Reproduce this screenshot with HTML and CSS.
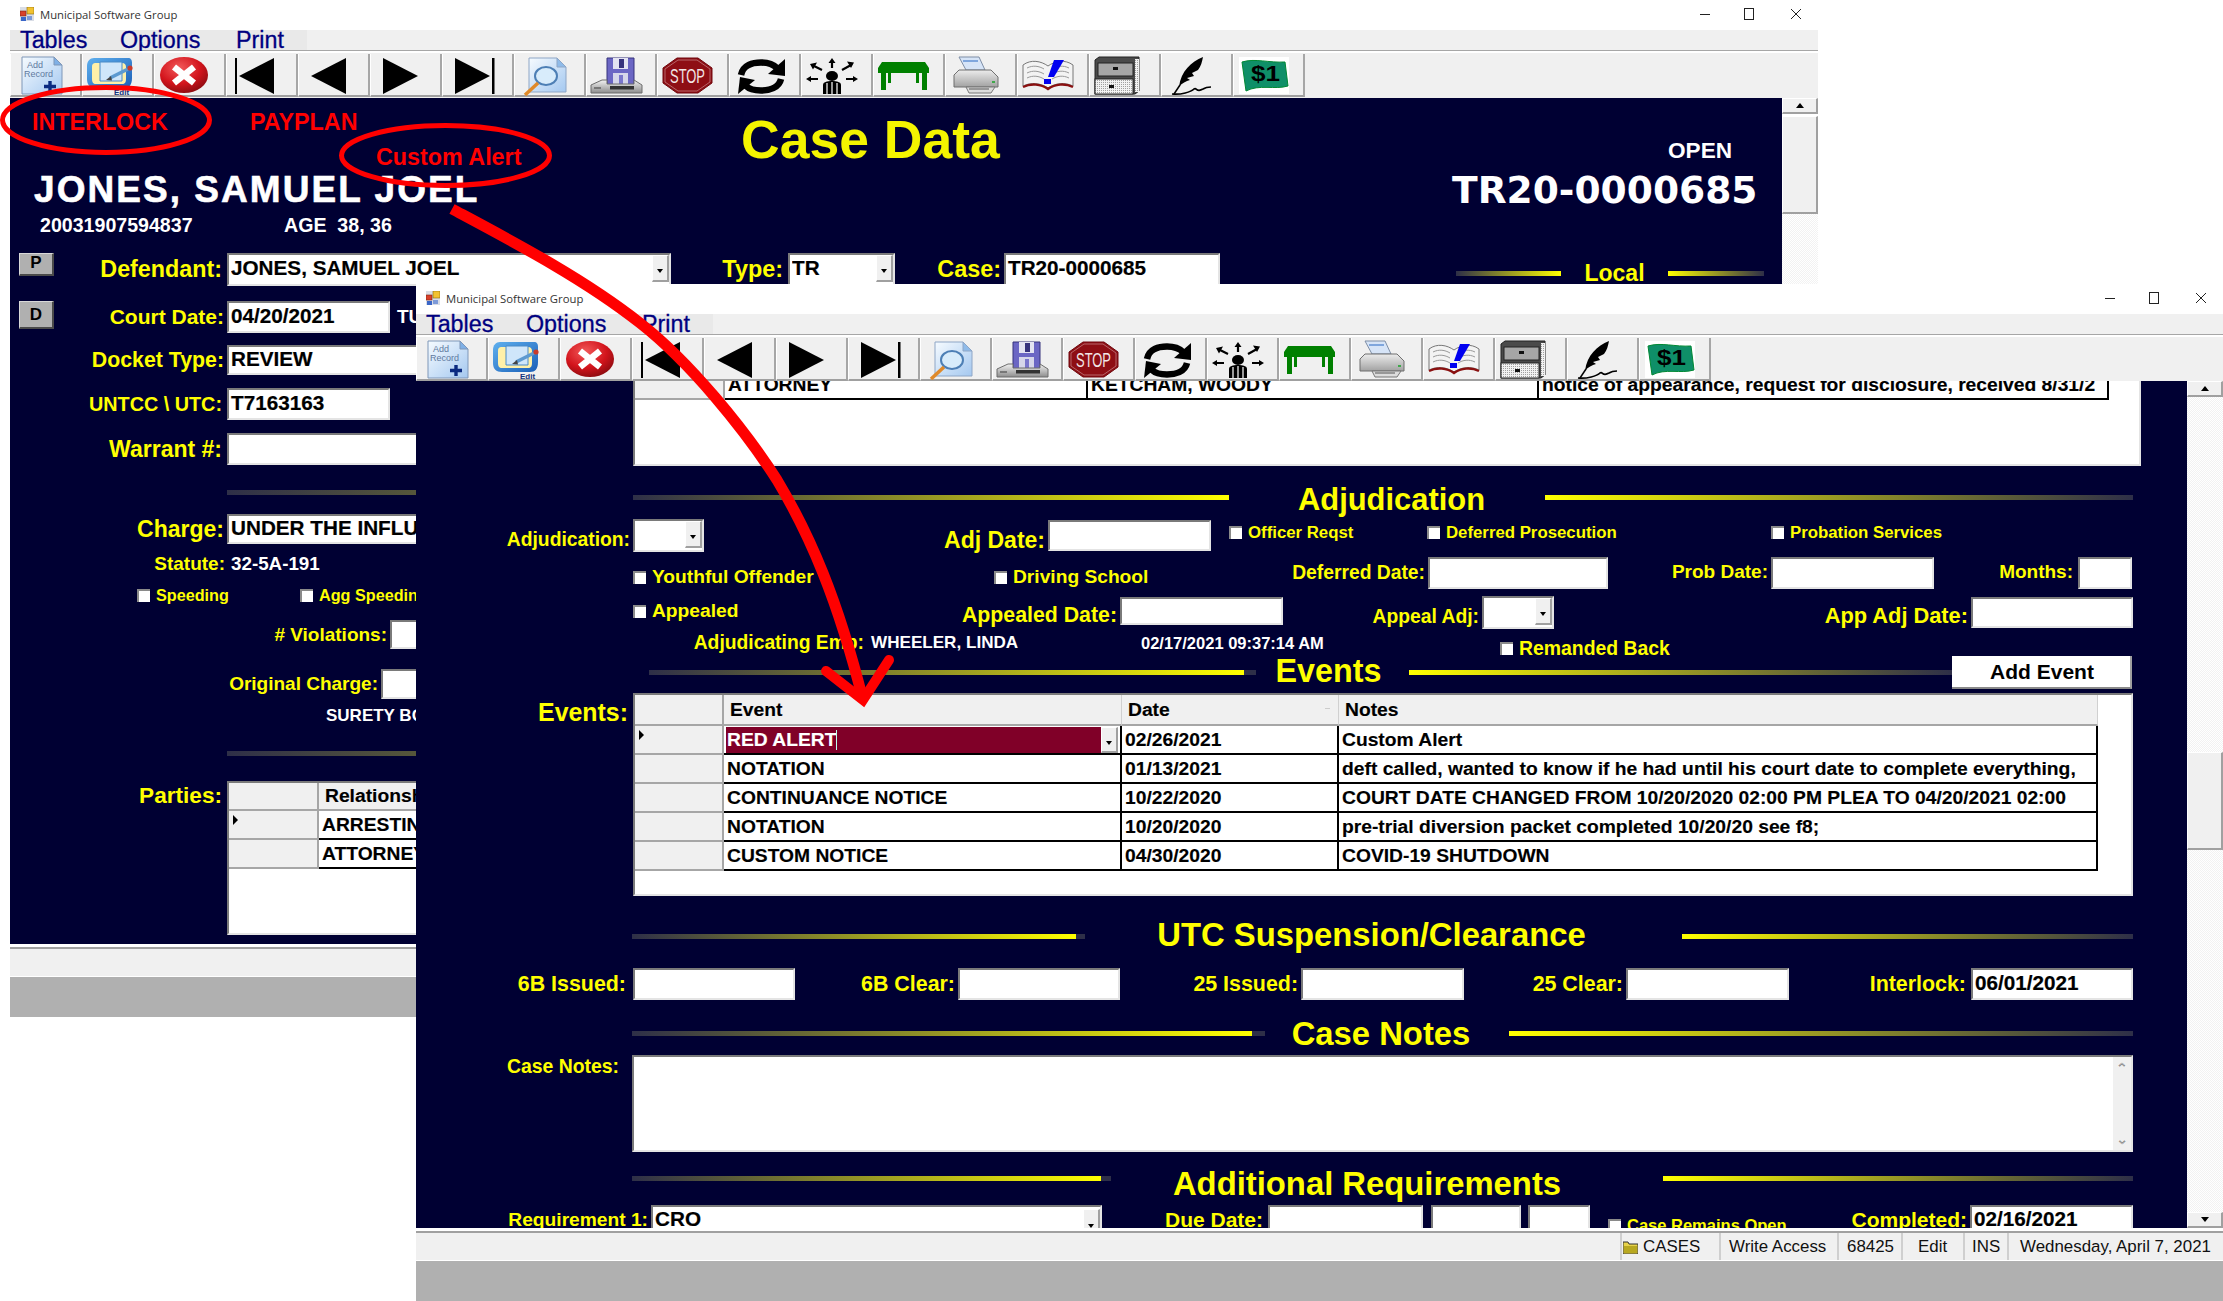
FILE: index.html
```html
<!DOCTYPE html>
<html lang="en">
<head>
<meta charset="utf-8">
<title>Municipal Software Group</title>
<link rel="stylesheet" href="styles.css">
</head>
<body>
<svg class="sprite" width="0" height="0" aria-hidden="true">
  <defs>
    <linearGradient id="gDoc" x1="0" y1="0" x2="1" y2="1"><stop offset="0" stop-color="#f6fbff"/><stop offset="1" stop-color="#a4c8f0"/></linearGradient>
    <linearGradient id="gEdit" x1="0" y1="0" x2="1" y2="1"><stop offset="0" stop-color="#5fb0ee"/><stop offset="1" stop-color="#1a5fb8"/></linearGradient>
    <radialGradient id="gRed" cx=".4" cy=".3" r=".8"><stop offset="0" stop-color="#f25a5a"/><stop offset=".55" stop-color="#d3141c"/><stop offset="1" stop-color="#7c0a0e"/></radialGradient>
    <linearGradient id="gDrive" x1="0" y1="0" x2="0" y2="1"><stop offset="0" stop-color="#f2f2f2"/><stop offset="1" stop-color="#8d8d8d"/></linearGradient>
    <linearGradient id="gPrint" x1="0" y1="0" x2="0" y2="1"><stop offset="0" stop-color="#ececec"/><stop offset="1" stop-color="#a2a2a2"/></linearGradient>
    <pattern id="pDots" width="2" height="2" patternUnits="userSpaceOnUse"><rect width="2" height="2" fill="#f2f2f2"/><rect width="1" height="1" fill="#a0a0a0"/></pattern>
    <symbol id="i-win" viewBox="0 0 14 14"><rect x="0" y="0" width="14" height="14" fill="#d9dde6"/><rect x="7" y="0" width="7" height="7" fill="#f2c230" stroke="#8a6a10" stroke-width=".6"/><rect x="0" y="4" width="6" height="5" fill="#d8402a" stroke="#7d2413" stroke-width=".6"/><rect x="1" y="10" width="5" height="4" fill="#3a66c8"/><rect x="7" y="9" width="5" height="4" fill="#7d9ad8"/></symbol>
    <symbol id="i-x" viewBox="0 0 12 12"><path d="M1 1L11 11M11 1L1 11" stroke="#222" stroke-width="1" fill="none"/></symbol>
    <symbol id="i-add" viewBox="0 0 72 42"><path d="M12 3H44L52 11V40H12Z" fill="url(#gDoc)" stroke="#7f97b8"/><path d="M44 3V11H52Z" fill="#7fb0e6" stroke="#7f97b8"/><text x="17" y="14" class="ict">Add</text><text x="14" y="23" class="ict">Record</text><path d="M40 27V38M34 32.500H46" stroke="#0b2a80" stroke-width="3.400" fill="none"/></symbol>
    <symbol id="i-edit" viewBox="0 0 72 42"><path d="M12 4H46C49 4 50 6 50 9V24C50 31 47 34 42 34H14C8 34 5 31 5 25V12C5 7 8 4 12 4Z" fill="url(#gEdit)"/><path d="M14 9H40C43 9 44 11 44 13V25C44 28 43 30 40 30H14C11 30 10 28 10 25V13C10 10 11 9 14 9Z" fill="#fff0a8"/><path d="M18 8H40V27H18Z" fill="#cfe6fa" stroke="#4a8ac6"/><path d="M28 24L46 15" stroke="#5d9ad0" stroke-width="3.500"/><path d="M29 22L24 26L30 26.500Z" fill="#444"/><circle cx="48" cy="14" r="2.600" fill="#c83a2a"/><text x="32" y="41" class="ice">Edit</text></symbol>
    <symbol id="i-close" viewBox="0 0 72 42"><ellipse cx="30" cy="21" rx="24" ry="18" fill="url(#gRed)"/><path d="M20 13L40 29M40 13L20 29" stroke="#fff" stroke-width="6.500"/></symbol>
    <symbol id="i-first" viewBox="0 0 72 42"><rect x="9" y="4" width="2" height="36"/><path d="M13 22L48 4V40Z"/></symbol>
    <symbol id="i-prev" viewBox="0 0 72 42"><path d="M13 22L48 4V40Z"/></symbol>
    <symbol id="i-next" viewBox="0 0 72 42"><path d="M13 4L48 22L13 40Z"/></symbol>
    <symbol id="i-last" viewBox="0 0 72 42"><path d="M13 4L48 22L13 40Z"/><rect x="50" y="4" width="2.500" height="36"/></symbol>
    <symbol id="i-find" viewBox="0 0 72 42"><path d="M15 4H43L52 13V38H15Z" fill="url(#gDoc)" stroke="#8ea6c6"/><path d="M43 4V13H52Z" fill="#8fbbe9" stroke="#8ea6c6"/><ellipse cx="32" cy="22" rx="11" ry="9" fill="#d8ecfb" stroke="#4d7fb5" stroke-width="2"/><path d="M24 29L11 41" stroke="#e08a2a" stroke-width="3.500"/></symbol>
    <symbol id="i-save" viewBox="0 0 72 42"><path d="M21 4H48V34H21Z" fill="#6b66c4" stroke="#37337d"/><rect x="27" y="4" width="15" height="11" fill="#e4e4f2"/><rect x="33" y="5" width="5" height="9" fill="#37337d"/><rect x="27" y="19" width="15" height="13" fill="#d6d6ea"/><path d="M33 21H37V30H33Z" fill="#7a76cc"/><path d="M16 26H21V30H48V26L56 31V39H5V31Z" fill="url(#gDrive)" stroke="#6d6d6d"/><rect x="24" y="32" width="24" height="3.500" fill="#333"/><rect x="8" y="33" width="7" height="2" fill="#777"/></symbol>
    <symbol id="i-stop" viewBox="0 0 72 42"><path d="M20 4H41L55 14V29L41 39H20L6 29V14Z" fill="#8e0e14" stroke="#70090e"/><path d="M21 6H40L53 15V28L40 37H21L8 28V15Z" fill="none" stroke="#c9898c" stroke-width=".7"/><text x="13" y="29" class="ics" textLength="35" lengthAdjust="spacingAndGlyphs">STOP</text></symbol>
    <symbol id="i-sync" viewBox="0 0 72 42"><path d="M12 21C14 11 24 8.500 32 8.500C39 8.500 44 10 48 14" fill="none" stroke="#000" stroke-width="6.500"/><path d="M56 5V22L39 20Z"/><path d="M52 25C50 34 40 36.500 32 36.500C25 36.500 20 35 17 32" fill="none" stroke="#000" stroke-width="6.500"/><path d="M9 40L11 23L26 26Z"/></symbol>
    <symbol id="i-people" viewBox="0 0 72 42"><ellipse cx="31" cy="22" rx="6" ry="5"/><path d="M22 40V31C22 28 26 27 31 27C36 27 40 28 40 31V40Z"/><path d="M31 28V40M26 29V40M36 29V40" stroke="#fff" stroke-width="1.200"/><path d="M31 14V8M21 16L13 12M41 16L50 11M17 25H8M45 25H54" stroke="#000" stroke-width="2.200"/><path d="M27.500 9L31 4L34.500 9ZM16 8.500L9 10L12 15.500ZM46 7.500L53 8.500L50 14ZM10 22V28L5 25ZM52 22V28L57 25Z"/></symbol>
    <symbol id="i-table" viewBox="0 0 72 42"><path d="M9 8H52L56 14V19H5V14Z" fill="#008000"/><rect x="8" y="19" width="5" height="17" fill="#008000"/><rect x="49" y="19" width="5" height="17" fill="#008000"/><rect x="15" y="19" width="3" height="10" fill="#008000"/><rect x="43" y="19" width="3" height="10" fill="#008000"/></symbol>
    <symbol id="i-print" viewBox="0 0 72 42"><path d="M14 3H34L40 16H21Z" fill="#d6e4f7" stroke="#7e8ea6"/><path d="M18 7H33" stroke="#7fa6dd" stroke-width="2"/><path d="M14 16H46L53 23V33H9V21Z" fill="url(#gPrint)" stroke="#6f6f6f"/><path d="M21 33H50L46 39H24Z" fill="#dcdcdc" stroke="#777"/><path d="M24 35H44" stroke="#555"/><rect x="47" y="27" width="3" height="2" fill="#3ea84a"/></symbol>
    <symbol id="i-book" viewBox="0 0 72 42"><path d="M6 11C14 5 24 7 31 12C38 7 48 5 56 11V32C48 28 38 29 31 34C24 29 14 28 6 32Z" fill="#f3f3f3" stroke="#777"/><path d="M10 14C16 11 22 12 27 15M10 19C16 16 22 17 27 20M10 24C16 21 22 22 27 25M35 15C40 12 46 11 52 14M35 20C40 17 46 16 52 19M35 25C40 22 46 21 52 24" stroke="#999" fill="none"/><path d="M6 33C14 29 24 30 31 35C38 30 48 29 56 33" stroke="#8a1010" stroke-width="2.400" fill="none"/><path d="M31 23L37 6H47L37 23Z" fill="#0000f0"/><rect x="27" y="25" width="7" height="5" fill="#0000f0"/></symbol>
    <symbol id="i-file" viewBox="0 0 72 42"><path d="M6 6L10 3H50V37L46 40H6Z" fill="#4a4a4a" stroke="#222"/><rect x="46" y="5" width="4" height="33" fill="url(#pDots)"/><rect x="9" y="9" width="35" height="13" fill="#a6a6a6" stroke="#222"/><rect x="24" y="13" width="5" height="3" fill="#111"/><rect x="6" y="25" width="38" height="15" fill="url(#pDots)" stroke="#222"/><rect x="20" y="31" width="5" height="3" fill="#111"/></symbol>
    <symbol id="i-quill" viewBox="0 0 72 42"><path d="M42 3C30 8 20 17 18 33C21 29 25 27 29 26L26 24L33 22L31 19L37 16C40 12 41 8 42 3Z"/><path d="M19 31L13 40" stroke="#000" stroke-width="1.500"/><path d="M11 40C20 41 30 38 33 35C36 33 35 39 42 35C45 33 47 33 50 33" fill="none" stroke="#000" stroke-width="1.700"/></symbol>
    <symbol id="i-cash" viewBox="0 0 72 42"><rect x="6" y="3" width="50" height="37" fill="#fff"/><path d="M9 8C22 4 36 9 52 8L55 32C42 36 26 30 13 37Z" fill="#0f8f68" stroke="#083" stroke-width="1"/><text x="18" y="27" class="icd" textLength="29" lengthAdjust="spacingAndGlyphs">$1</text></symbol>
    <symbol id="i-folder" viewBox="0 0 15 14"><path d="M0 2H5L6 4H15V14H0Z" fill="#e7d24a" stroke="#333"/><path d="M1 6H14V13H1Z" fill="#b8a820"/></symbol>
  </defs>
</svg>

<section class="win w1">
  <header class="title"><svg class="win-ic"><use href="#i-win"/></svg><span class="title-t">Municipal Software Group</span><span class="caps"><span class="cap-min"></span><span class="cap-max"></span><svg class="cap-x"><use href="#i-x"/></svg></span></header>
  <nav class="menu"><div class="menu-in"><span class="m1">Tables</span><span class="m2">Options</span><span>Print</span></div></nav>
  <div class="tools">
    <span class="tb"><svg><use href="#i-add"/></svg></span><span class="tb"><svg><use href="#i-edit"/></svg></span><span class="tb"><svg><use href="#i-close"/></svg></span><span class="tb"><svg><use href="#i-first"/></svg></span><span class="tb"><svg><use href="#i-prev"/></svg></span><span class="tb"><svg><use href="#i-next"/></svg></span><span class="tb"><svg><use href="#i-last"/></svg></span><span class="tb"><svg><use href="#i-find"/></svg></span><span class="tb"><svg><use href="#i-save"/></svg></span><span class="tb"><svg><use href="#i-stop"/></svg></span><span class="tb"><svg><use href="#i-sync"/></svg></span><span class="tb"><svg><use href="#i-people"/></svg></span><span class="tb"><svg><use href="#i-table"/></svg></span><span class="tb"><svg><use href="#i-print"/></svg></span><span class="tb"><svg><use href="#i-book"/></svg></span><span class="tb"><svg><use href="#i-file"/></svg></span><span class="tb"><svg><use href="#i-quill"/></svg></span><span class="tb"><svg><use href="#i-cash"/></svg></span>
  </div>
  <div class="client">
    <div class="form">
      <div class="head">
        <div class="head-l">
          <div class="alerts"><span class="alert a1">INTERLOCK</span><span class="alert">PAYPLAN</span></div>
          <div class="alert custom">Custom Alert</div>
          <div class="who">JONES, SAMUEL JOEL</div>
          <div class="ids"><span class="id1">20031907594837</span><span>AGE&nbsp; 38, 36</span></div>
        </div>
        <div class="casedata">Case Data</div>
        <div class="head-r"><div class="open">OPEN</div><div class="caseno">TR20-0000685</div></div>
      </div>
      <div class="r1a">
        <span></span><span class="pbtn">P</span><span class="lbl s233 pr5">Defendant:</span><div class="fld combo"><span>JONES, SAMUEL JOEL</span><i class="drop"></i></div><span class="lbl s234 pr5">Type:</span><div class="fld combo"><span>TR</span><i class="drop"></i></div><span class="lbl s234">Case:</span><div class="fld">TR20-0000685</div><span></span>
        <div class="local"><i class="bar bl w105"></i><span>Local</span><i class="bar br w96"></i></div>
      </div>
      <div class="r1b"><span></span><span class="pbtn dbtn">D</span><span class="lbl s21">Court Date:</span><div class="fld">04/20/2021</div><span class="tu">TUESDAY</span></div>
      <div class="lrow h30 mt12"><span class="lbl s213">Docket Type:</span><div class="fld">REVIEW</div></div>
      <div class="lrow short h32 mt13"><span class="lbl s198 pr5">UNTCC \ UTC:</span><div class="fld">T7163163</div></div>
      <div class="lrow h32 mt13"><span class="lbl s23 pr5">Warrant #:</span><div class="fld"></div></div>
      <i class="bar bl rule1"></i>
      <div class="lrow h30 mt19"><span class="lbl s23">Charge:</span><div class="fld">UNDER THE INFLUENCE OF ALCOHOL</div></div>
      <div class="lrow h17 mt11"><span class="lbl s19 pr3">Statute:</span><span class="val s188">32-5A-191</span></div>
      <div class="chkrow"><span class="chk s162"><i class="cb"></i>Speeding</span><span class="chk s162"><i class="cb"></i>Agg Speeding</span></div>
      <div class="violrow"><span class="lbl s19">&#35; Violations:</span><div class="fld"></div></div>
      <div class="origrow"><span class="lbl s19">Original Charge:</span><div class="fld"></div></div>
      <div class="surety">SURETY BOND</div>
      <i class="bar bl rule2"></i>
      <div class="partyrow">
        <span class="lbl s225 pr5 bigline">Parties:</span>
        <div class="grid gp1">
          <table class="dg">
            <tr class="hd"><th class="rh"></th><th>Relationship</th><th>Name</th></tr>
            <tr><td class="rh"><i class="ptr"></i></td><td class="wide">ARRESTING</td><td>OFFICER</td></tr>
            <tr><td class="rh"></td><td class="wide">ATTORNEY</td><td>KETCHAM, WOODY</td></tr>
          </table>
        </div>
      </div>
    </div>
    <aside class="sbar"><span class="sb-btn"><i class="up"></i></span><span class="sb-thumb t1"></span><span class="sb-track"></span><span class="sb-btn"><i class="dn"></i></span></aside>
  </div>
  <footer class="status"></footer>
  <div class="mdi"></div>
</section>

<section class="win w2">
  <header class="title"><svg class="win-ic"><use href="#i-win"/></svg><span class="title-t">Municipal Software Group</span><span class="caps"><span class="cap-min"></span><span class="cap-max"></span><svg class="cap-x"><use href="#i-x"/></svg></span></header>
  <nav class="menu"><div class="menu-in"><span class="m1">Tables</span><span class="m2">Options</span><span>Print</span></div></nav>
  <div class="tools">
    <span class="tb"><svg><use href="#i-add"/></svg></span><span class="tb"><svg><use href="#i-edit"/></svg></span><span class="tb"><svg><use href="#i-close"/></svg></span><span class="tb"><svg><use href="#i-first"/></svg></span><span class="tb"><svg><use href="#i-prev"/></svg></span><span class="tb"><svg><use href="#i-next"/></svg></span><span class="tb"><svg><use href="#i-last"/></svg></span><span class="tb"><svg><use href="#i-find"/></svg></span><span class="tb"><svg><use href="#i-save"/></svg></span><span class="tb"><svg><use href="#i-stop"/></svg></span><span class="tb"><svg><use href="#i-sync"/></svg></span><span class="tb"><svg><use href="#i-people"/></svg></span><span class="tb"><svg><use href="#i-table"/></svg></span><span class="tb"><svg><use href="#i-print"/></svg></span><span class="tb"><svg><use href="#i-book"/></svg></span><span class="tb"><svg><use href="#i-file"/></svg></span><span class="tb"><svg><use href="#i-quill"/></svg></span><span class="tb"><svg><use href="#i-cash"/></svg></span>
  </div>
  <div class="client">
    <div class="form">
      <div class="grid gp2">
        <table class="dg">
          <tr><td class="rh"></td><td class="c-rel">ATTORNEY</td><td class="c-name">KETCHAM, WOODY</td><td class="c-note">notice of appearance, request for disclosure, received 8/31/2</td></tr>
        </table>
      </div>

      <div class="sec sec-adj"><i class="bar bl"></i><h2 class="t31 tadj">Adjudication</h2><i class="bar br"></i></div>

      <div class="row ra"><span class="lbl s193 low4">Adjudication:</span><div class="fld combo"><span></span><i class="drop"></i></div><span class="lbl s23 low5">Adj Date:</span><div class="fld fh31"></div><span></span><span class="chk s168 up3"><i class="cb"></i>Officer Reqst</span><span class="chk s168 up3"><i class="cb"></i>Deferred Prosecution</span><span class="chk s168 up3"><i class="cb"></i>Probation Services</span></div>

      <div class="row rb"><span></span><span class="chk s192 low4"><i class="cb"></i>Youthful Offender</span><span class="chk s192 low4"><i class="cb"></i>Driving School</span><span class="lbl s193">Deferred Date:</span><div class="fld"></div><span class="lbl s19 up1">Prob Date:</span><div class="fld"></div><span class="lbl s19 up1 pr5">Months:</span><div class="fld"></div></div>

      <div class="row rc"><span></span><span class="chk s192 up1"><i class="cb"></i>Appealed</span><span class="lbl s213 low3">Appealed Date:</span><div class="fld fh28"></div><span class="lbl s193 low4">Appeal Adj:</span><div class="fld combo"><span></span><i class="drop"></i></div><span class="lbl s218 low3">App Adj Date:</span><div class="fld fh31"></div></div>

      <div class="row rd"><span class="lbl s193 pr7">Adjudicating Emp:</span><span class="val s171">WHEELER, LINDA</span><span class="val s165">02/17/2021 09:37:14 AM</span><span class="chk s194 low5"><i class="cb"></i>Remanded Back</span></div>

      <div class="sec sec-ev"><i class="bar blt"></i><h2 class="t32">Events</h2><i class="bar br"></i><button class="btn">Add Event</button></div>

      <div class="row re"><span class="lbl s249 pr5 bigline">Events:</span>
        <div class="grid gev">
          <table class="dg dgev">
            <colgroup><col class="ce0"><col class="ce1"><col class="ce2"><col class="ce3"></colgroup>
            <tr class="hd"><th class="rh"></th><th>Event</th><th class="sorted">Date<i class="sort"></i></th><th>Notes</th></tr>
            <tr><td class="rh"><i class="ptr"></i></td><td class="cur"><div class="cur-in"><span>RED ALERT<i class="caret"></i></span><i class="drop"></i></div></td><td>02/26/2021</td><td class="bf">Custom Alert</td></tr>
            <tr><td class="rh"></td><td>NOTATION</td><td>01/13/2021</td><td>deft called, wanted to know if he had until his court date to complete everything,</td></tr>
            <tr><td class="rh"></td><td>CONTINUANCE NOTICE</td><td>10/22/2020</td><td>COURT DATE CHANGED FROM 10/20/2020 02:00 PM PLEA TO 04/20/2021 02:00</td></tr>
            <tr><td class="rh"></td><td>NOTATION</td><td>10/20/2020</td><td>pre-trial diversion packet completed 10/20/20 see f8;</td></tr>
            <tr><td class="rh"></td><td>CUSTOM NOTICE</td><td>04/30/2020</td><td>COVID-19 SHUTDOWN</td></tr>
          </table>
        </div>
      </div>

      <div class="sec sec-utc"><i class="bar blt"></i><h2 class="t32">UTC Suspension/Clearance</h2><i class="bar br"></i></div>

      <div class="row rf"><span class="lbl s214 pr7">6B Issued:</span><div class="fld"></div><span class="lbl s214">6B Clear:</span><div class="fld"></div><span class="lbl s214">25 Issued:</span><div class="fld"></div><span class="lbl s214">25 Clear:</span><div class="fld"></div><span class="lbl s214 pr5">Interlock:</span><div class="fld">06/01/2021</div></div>

      <div class="sec sec-cn"><i class="bar blt"></i><h2 class="t32">Case Notes</h2><i class="bar br"></i></div>

      <div class="row rg"><span class="lbl s194 pr12 noteline">Case Notes:</span><div class="fld notes"><span class="nsb"><i class="ch">&#8963;</i><i class="ch flip">&#8963;</i></span></div></div>

      <div class="sec sec-ar"><i class="bar blt"></i><h2 class="t32">Additional Requirements</h2><i class="bar br"></i></div>

      <div class="row rh2"><span class="lbl s192">Requirement 1:</span><div class="fld combo"><span>CRO</span><i class="drop"></i></div><span class="lbl s21 pr5">Due Date:</span><div class="fld"></div><span></span><div class="fld"></div><span></span><div class="fld"></div><span></span><span class="chk s165 cro"><i class="cb"></i>Case Remains Open</span><span class="lbl s21">Completed:</span><div class="fld">02/16/2021</div></div>
    </div>
    <aside class="sbar"><span class="sb-btn"><i class="up"></i></span><span class="sb-track tr1"></span><span class="sb-thumb t2"></span><span class="sb-track"></span><span class="sb-btn"><i class="dn"></i></span></aside>
  </div>
  <footer class="status">
    <span class="st-sp"></span>
    <span class="st st1"><svg class="folder"><use href="#i-folder"/></svg>CASES</span>
    <span class="st st2">Write Access</span>
    <span class="st st3">68425</span>
    <span class="st st4">Edit</span>
    <span class="st st5">INS</span>
    <span class="st st6">Wednesday, April 7, 2021</span>
  </footer>
  <div class="mdi"></div>
</section>

<svg class="marks" viewBox="0 0 2223 1301" aria-hidden="true">
  <ellipse cx="106" cy="120" rx="103.500" ry="32.500"/>
  <ellipse cx="445.500" cy="155.500" rx="104" ry="30"/>
  <path class="shaft" d="M452 209C510 240 583 278 640 323C690 362 745 430 777 480C810 535 838 600 863 700"/>
  <path class="head" d="M826 671L863 700L889 660"/>
</svg>
</body>
</html>
```
FILE: styles.css
```css
* { box-sizing: border-box; }
html, body { margin: 0; padding: 0; }
body { position: relative; width: 2223px; height: 1301px; overflow: hidden; background: #fff; font-family: "Liberation Sans", Arial, sans-serif; }
.sprite { position: absolute; }

/* windows on the desktop */
.win { position: absolute; display: flex; flex-direction: column; background: #fff; overflow: hidden; }
.w1 { left: 10px; top: 0; width: 1808px; height: 1017px; }
.w2 { left: 416px; top: 284px; width: 1807px; height: 1017px; }

.title { height: 30px; display: flex; align-items: center; padding-left: 10px; background: #fff; flex: none; }
.win-ic { width: 14px; height: 14px; margin-right: 6px; margin-top: -2px; }
.title-t { font: 11.300px/14px "Open Sans", "Liberation Sans", sans-serif; color: #333; margin-top: -1px; }
.caps { margin-left: auto; display: flex; align-items: center; width: 103px; height: 14px; margin-right: 15px; margin-top: -2px; }
.cap-min { width: 10px; height: 1px; background: #222; margin-right: 34px; }
.cap-max { width: 10px; height: 12px; border: 1px solid #222; margin-right: 36px; }
.cap-x { width: 12px; height: 12px; }

.menu { height: 21px; flex: none; background: #f0f0f0; border-bottom: 1px solid #a6a6a6; }
.menu-in { width: 297px; height: 20px; background: #e9e9e9; display: flex; align-items: center; padding-left: 10px; color: #000080; font-size: 23.300px; -webkit-text-stroke: .3px #000080; }
.m1 { width: 100px; }
.m2 { width: 116px; }

.tools { height: 46px; flex: none; background: #f0f0f0; border-top: 2px solid #fff; display: flex; padding-top: 1px; }
.w1 .tools { height: 47px; }
.tb { width: 71.950px; height: 43px; border-bottom: 2px solid #a0a0a0; border-right: 2px solid #a6a6a6; border-left: 1px solid #fff; flex: none; position: relative; display: block; }
.tb svg { width: 72px; height: 42px; display: block; margin-left: -1px; overflow: hidden; fill: #000; }
.ict { font: 9px "Liberation Sans", sans-serif; fill: #5f7aa0; }
.ice { font: bold 8px "Liberation Sans", sans-serif; fill: #12307a; }
.ics { font: 20px "Liberation Sans", sans-serif; fill: #f2e6e6; }
.icd { font: bold 22px "Liberation Sans", sans-serif; fill: #000; }

.client { flex: none; height: 847px; display: flex; background: #000033; }
.w1 .client { height: 846px; }
.form { flex: 1; min-width: 0; overflow: hidden; color: #ff0; }
.sbar { width: 36px; flex: none; display: flex; flex-direction: column; background: #fff; }
.sb-btn { height: 16px; flex: none; background: #f0f0f0; border: 1px solid #fff; border-bottom: 2px solid #a0a0a0; border-right: 2px solid #a0a0a0; display: flex; align-items: center; justify-content: center; }
.sb-track { flex: 1; background: repeating-conic-gradient(#f2f2f2 0 25%, #fff 0 50%) 0 0 / 2px 2px; }
.tr1 { flex: none; height: 355px; }
.sb-thumb { height: 98px; flex: none; background: #f0f0f0; border: 1px solid #fff; border-bottom: 2px solid #a0a0a0; border-right: 2px solid #a0a0a0; }
.t1 { margin-top: 2px; }
.up { width: 0; height: 0; border: 4px solid transparent; border-top: 0; border-bottom: 5px solid #000; }
.dn { width: 0; height: 0; border: 4px solid transparent; border-bottom: 0; border-top: 5px solid #000; }

.status { height: 33px; flex: none; background: #f0f0f0; border-top: 3px solid #fff; box-shadow: inset 0 2px 0 #a0a0a0; display: flex; border-bottom: 1px solid #fff; font-size: 16.900px; color: #111; }
.mdi { flex: 1; background: #b0b0b0; }
.st-sp { width: 1204px; }
.st { display: flex; align-items: center; border-left: 2px solid #cfcfcf; padding-left: 8px; margin-top: 2px; white-space: nowrap; }
.st1 { width: 99px; padding-left: 1px; }
.st2 { width: 118px; }
.st3 { width: 64px; padding-left: 8px; }
.st4 { width: 62px; padding-left: 15px; }
.st5 { width: 44px; padding-left: 7px; }
.st6 { width: 216px; padding-left: 11px; }
.folder { width: 15px; height: 14px; margin-right: 5px; }

/* controls */
.lbl { font-weight: 700; color: #ff0; text-align: right; padding-right: 3px; white-space: nowrap; align-self: center; }
.val { font-weight: 700; color: #fff; white-space: nowrap; align-self: center; }
.pr3 { padding-right: 2px; }
.pr5 { padding-right: 5px; }
.pr7 { padding-right: 7px; }
.pr12 { padding-right: 13px; }
.fld { background: #fff; color: #000; font-weight: 700; font-size: 20.700px; line-height: 1; padding: 0 0 2px 2px; -webkit-text-stroke: .2px #000; border-top: 2px solid #7a7a7a; border-left: 2px solid #7a7a7a; border-right: 2px solid #e4e4e4; border-bottom: 2px solid #e4e4e4; white-space: nowrap; overflow: hidden; display: flex; align-items: center; min-width: 0; }
.fh28 { height: 28px; margin-top: 1px; }
.fh31 { height: 31px; margin-top: 1px; }
.combo > span:first-child { flex: 1; overflow: hidden; }
.drop { width: 17px; align-self: stretch; flex: none; background: #f0f0f0; border: 1px solid #fff; border-right: 2px solid #a0a0a0; border-bottom: 2px solid #a0a0a0; position: relative; display: flex; align-items: center; justify-content: center; }
.drop::after { content: ""; width: 0; height: 0; border: 3.500px solid transparent; border-bottom: 0; border-top: 4px solid #000; margin-top: 6px; }
.cb { width: 13px; height: 13px; flex: none; background: #fff; border-top: 2px solid #8a8a8a; border-left: 2px solid #8a8a8a; display: block; }
.chk { display: flex; align-items: center; gap: 6px; font-weight: 700; color: #ff0; white-space: nowrap; align-self: center; }
.up1 { margin-top: -3px; }
.up3 { margin-top: -6px; }
.low3 { margin-top: 6px; }
.low4 { margin-top: 8px; }
.low5 { margin-top: 10px; }

.s162 { font-size: 16.200px; }
.s165 { font-size: 16.500px; }
.s168 { font-size: 16.800px; }
.s171 { font-size: 17.100px; }
.s188 { font-size: 18.800px; }
.s19 { font-size: 19px; }
.s192 { font-size: 19.200px; }
.s193 { font-size: 19.300px; }
.s194 { font-size: 19.400px; }
.s198 { font-size: 19.800px; }
.s21 { font-size: 21px; }
.s213 { font-size: 21.300px; }
.s214 { font-size: 21.400px; }
.s218 { font-size: 21.800px; }
.s225 { font-size: 22.600px; }
.s23 { font-size: 23px; }
.s233 { font-size: 23.300px; }
.s234 { font-size: 23.400px; }
.s249 { font-size: 24.900px; }

.bar { display: block; height: 5px; align-self: center; }
.bl { background: linear-gradient(90deg, #2e2f48, #ff0); }
.blt { background: linear-gradient(90deg, #2e2f48, #ff0 98%, #2e2f48 98%); }
.br { background: linear-gradient(90deg, #ff0, #2e2f48); }
.w105 { width: 105px; }
.w96 { width: 96px; }

.grid { background: #fff; border-top: 2px solid #7a7a7a; border-left: 2px solid #7a7a7a; border-right: 2px solid #e4e4e4; border-bottom: 2px solid #e4e4e4; overflow: hidden; }
.dg { border-collapse: separate; border-spacing: 0; table-layout: fixed; color: #000; font-size: 19.250px; font-weight: 700; -webkit-text-stroke: .15px #000; }
.dg th { height: 31px; background: #f0f0f0; text-align: left; padding: 0 0 0 6px; font-weight: 700; font-size: 19.250px; border-bottom: 2px solid #a6a6a6; border-right: 1px solid #d0d0d0; white-space: nowrap; overflow: hidden; }
.dg td { height: 29px; padding: 0 0 0 3px; white-space: nowrap; overflow: hidden; border-bottom: 2px solid #000; border-right: 2px solid #000; }
.dg td.rh, .dg th.rh { background: #f0f0f0; border-bottom: 2px solid #a6a6a6; border-right: 2px solid #a6a6a6; padding: 0; }
.dg td.rh { vertical-align: top; }
.ptr { display: block; width: 0; height: 0; margin: 4px 0 0 4px; border: 5px solid transparent; border-right: 0; border-left: 5px solid #000; }

/* first window */
.head { display: grid; grid-template-columns: 731px 711px 330px; height: 155px; }
.alerts { display: flex; height: 49px; align-items: center; padding-left: 22px; }
.alert { color: #f00; font-weight: 700; font-size: 23.300px; white-space: nowrap; }
.a1 { width: 218px; }
.custom { height: 20px; line-height: 20px; padding-left: 366px; }
.who { height: 45px; line-height: 45px; padding-left: 24px; color: #fff; font-weight: 700; font-size: 37px; letter-spacing: 2.050px; white-space: nowrap; -webkit-text-stroke: .6px #fff; }
.ids { height: 22px; line-height: 22px; padding-left: 30px; color: #fff; font-weight: 700; font-size: 19.600px; display: flex; white-space: nowrap; margin-top: 2px; }
.id1 { width: 244px; }
.casedata { color: #f4f400; font-weight: 700; font-size: 53.500px; line-height: 83px; height: 83px; white-space: nowrap; }
.head-r { color: #fff; font-weight: 700; }
.open { font-size: 22.600px; line-height: 26px; padding: 40px 0 0 216px; box-sizing: content-box; height: 26px; }
.caseno { font-family: "DejaVu Sans", sans-serif; font-size: 37.600px; line-height: 52px; white-space: nowrap; }

.r1a { display: grid; height: 33px; grid-template-rows: 33px; grid-template-columns: 9px 35px 173px 444px 117px 107px 109px 216px 236px 308px; }
.r1b { display: grid; height: 32px; grid-template-rows: 32px; margin-top: 15px; grid-template-columns: 9px 35px 173px 163px 1fr; }
.pbtn { height: 23px; background: #b0b0b0; border: 1px solid #d8d8d8; border-right: 2px solid #4a4a4a; border-bottom: 2px solid #4a4a4a; color: #000; font-weight: 700; font-size: 17px; line-height: 18px; text-align: center; }
.dbtn { height: 28px; line-height: 26px; }
.tu { color: #fff; font-weight: 700; font-size: 19px; padding-left: 7px; align-self: center; white-space: nowrap; }
.local { display: flex; align-items: center; font-size: 23px; font-weight: 700; color: #ff0; margin-top: 8px; height: 24px; justify-content: space-between; }
.lrow { display: grid; grid-template-columns: 173px 430px; grid-template-rows: minmax(0, 1fr); padding-left: 44px; }
.lrow.short { grid-template-columns: 173px 163px; }
.h17 { height: 17px; }
.h30 { height: 30px; }
.h32 { height: 32px; }
.mt11 { margin-top: 11px; }
.mt12 { margin-top: 12px; }
.mt13 { margin-top: 13px; }
.mt19 { margin-top: 19px; }
.val.s188 { padding-left: 4px; }
.rule1 { margin: 25px 0 0 217px; width: 1000px; }
.rule2 { margin: 29px 0 0 217px; width: 1000px; }
.chkrow { display: grid; grid-template-columns: 163px 1fr; grid-template-rows: minmax(0, 1fr); padding-left: 127px; height: 13px; margin-top: 17px; }
.violrow { display: grid; grid-template-columns: 380px 160px; grid-template-rows: minmax(0, 1fr); height: 29px; margin-top: 18px; }
.origrow { display: grid; grid-template-columns: 371px 160px; grid-template-rows: minmax(0, 1fr); height: 30px; margin-top: 20px; }
.surety { margin: 11px 0 0 316px; height: 12px; line-height: 12px; color: #fff; font-weight: 700; font-size: 17px; white-space: nowrap; }
.partyrow { display: grid; grid-template-columns: 217px 1000px; grid-template-rows: minmax(0, 1fr); height: 154px; margin-top: 25px; }
.bigline { align-self: start; line-height: 38px; }
.partyrow .bigline { line-height: 30px; }
.gp1 .dg th:first-child, .gp1 .dg td:first-child { width: 90px; }
.gp1 .dg { width: 996px; }
.gp1 .dg td:nth-child(2), .gp1 .dg th:nth-child(2) { width: 363px; }
.gp1 .dg th { height: 28px; }
.gp1 td.wide { padding-left: 3px; }

/* second window */
.gp2 { margin: -12px 0 0 217px; width: 1508px; height: 97px; }
.gp2 .dg { width: 1474px; font-weight: 700; }
.gp2 .rh { width: 90px; }
.c-rel { width: 363px; }
.c-name { width: 451px; }
.c-note { width: 570px; }

.sec { display: grid; grid-template-rows: minmax(0, 1fr); align-items: center; text-align: center; }
.sec h2 { margin: 0; color: #ff0; font-weight: 700; white-space: nowrap; }
.t31 { font-size: 30.900px; line-height: 26px; }
.t32 { font-size: 32.800px; line-height: 26px; }
.tadj { padding-left: 9px; padding-top: 5px; }
.sec-adj { height: 26px; margin-top: 18px; padding-left: 217px; grid-template-columns: 596px 316px 588px; }
.sec-ev { height: 33px; margin-top: 3px; padding-left: 233px; grid-template-columns: 607px 153px 543px 180px; }
.sec-ev h2 { margin-top: -3px; padding-right: 8px; font-size: 32.300px; }
.sec-utc { height: 28px; margin-top: 26px; padding-left: 216px; grid-template-columns: 453px 597px 451px; }
.sec-utc h2 { margin-top: -2px; padding-right: 24px; }
.sec-cn { height: 27px; margin-top: 20px; padding-left: 216px; grid-template-columns: 633px 244px 624px; }
.sec-cn h2 { padding-right: 12px; }
.sec-ar { height: 27px; margin-top: 13px; padding-left: 216px; grid-template-columns: 479px 552px 470px; }
.sec-ar h2 { margin-top: 10px; padding-right: 40px; }
.btn { height: 33px; width: 180px; background: #fff; border: 0; border-right: 2px solid #a0a0a0; border-bottom: 2px solid #8a8a8a; font: 700 21px "Liberation Sans", sans-serif; color: #000; padding: 0 0 0 2px; }

.row { display: grid; grid-template-rows: minmax(0, 1fr); }
.ra { height: 33px; margin-top: 9px; grid-template-columns: 217px 71px 344px 163px 18px 198px 344px 1fr; }
.rb { height: 32px; margin-top: 5px; grid-template-columns: 217px 361px 156px 278px 180px 163px 163px 144px 54px; }
.rc { height: 33px; margin-top: 7px; grid-template-columns: 217px 317px 170px 163px 199px 72px 417px 162px; }
.rd { height: 20px; margin-top: 4px; grid-template-columns: 455px 270px 359px 1fr; }
.re { height: 203px; margin-top: 4px; grid-template-columns: 217px 1500px; }
.rf { height: 32px; margin-top: 18px; grid-template-columns: 217px 162px 163px 162px 181px 163px 162px 163px 182px 162px; }
.rg { height: 97px; margin-top: 8px; grid-template-columns: 216px 1501px; }
.rh2 { height: 36px; margin-top: 13px; grid-template-columns: 235px 451px 166px 155px 8px 90px 7px 62px 18px 182px 180px 163px; }
.noteline { align-self: start; line-height: 22px; }
.rg .fld { justify-content: flex-end; align-items: stretch; padding: 0; }
.nsb { width: 18px; background: #f0f0f0; display: flex; flex-direction: column; justify-content: space-between; align-items: center; color: #bbb; font-style: normal; font-size: 14px; font-weight: 400; padding: 4px 0; }
.ch { font-style: normal; line-height: 14px; }
.flip { transform: rotate(180deg); }
.rh2 .chk.cro { align-self: start; margin-top: 11px; }
.rh2 .lbl { margin-top: -6px; }
.rh2 .fld { align-items: flex-start; padding-top: 2px; }

.dgev { width: 1463px; }
.ce0 { width: 89px; }
.ce1 { width: 398px; }
.ce2 { width: 217px; }
.ce3 { width: 759px; }
.bf { font-weight: 700; }
.sorted { position: relative; }
.sort { position: absolute; right: 8px; top: 13px; width: 5px; height: 5px; border-top: 1px solid #ccc; }
.dg td.cur { padding: 0 2px 0 2px; vertical-align: top; }
.cur-in { background: #800028; color: #fff; height: 26px; margin-top: 1px; display: flex; justify-content: space-between; align-items: center; padding-left: 1px; -webkit-text-stroke: .15px #fff; }
.cur-in .drop { width: 17px; height: 26px; align-self: auto; }
.caret { display: inline-block; width: 1px; height: 20px; background: #bfe; vertical-align: -4px; }

/* hand-drawn annotations on top */
.marks { position: absolute; left: 0; top: 0; width: 2223px; height: 1301px; pointer-events: none; fill: none; }
.marks ellipse { stroke: #f00; stroke-width: 5; }
.shaft { stroke: #f00; stroke-width: 11; }
.marks .head { stroke: #f00; stroke-width: 10; stroke-linecap: round; stroke-linejoin: miter; }
```
